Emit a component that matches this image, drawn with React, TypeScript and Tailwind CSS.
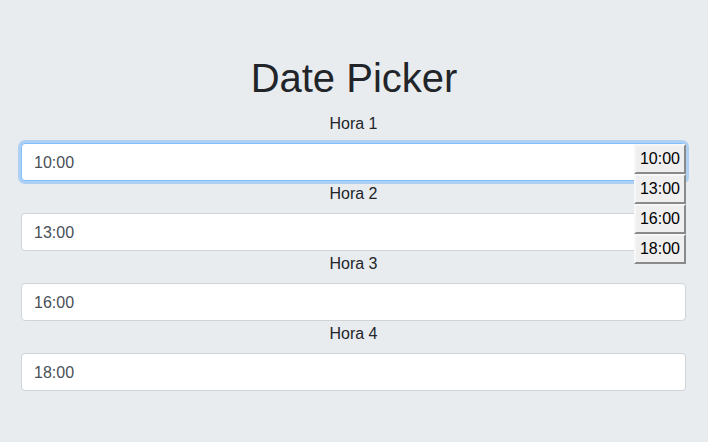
import React from "react";

const font = { fontFamily: '"Liberation Sans", Arial, sans-serif' };

export default function App() {
  const items = [
    { label: "Hora 1", value: "10:00", focus: true },
    { label: "Hora 2", value: "13:00" },
    { label: "Hora 3", value: "16:00" },
    { label: "Hora 4", value: "18:00" },
  ];
  return (
    <div className="min-h-[442px] w-[708px] bg-[#e9ecef] pt-[54px] text-[#212529]" style={font}>
      <h1 className="mb-[9px] text-center text-[40px] leading-[48px] font-normal text-[#212529]">Date Picker</h1>
      <div className="relative ml-[21px] mr-[22px]">
        {items.map((it) => (
          <div key={it.label} className="flex flex-col">
            <label className="mb-[7px] pt-[1px] text-center text-[16px] leading-[24px]">{it.label}</label>
            <div
              className={
                "h-[38px] rounded-[4px] border bg-white px-[12px] pt-[7px] text-[16px] leading-[24px] text-[#495057] " +
                (it.focus
                  ? "border-[#80bdff] shadow-[0_0_0_3px_rgba(0,123,255,0.25)]"
                  : "border-[#ced4da]")
              }
            >
              {it.value}
            </div>
          </div>
        ))}
        <div className="absolute right-0 top-[33px] flex w-[52px] flex-col">
          {["10:00", "13:00", "16:00", "18:00"].map((t) => (
            <button
              key={t}
              className="h-[30px] w-[52px] border-2 border-t-[#f7f7f7] border-l-[#f7f7f7] border-r-[#8a8a8a] border-b-[#8a8a8a] bg-[#efefef] text-[16px] leading-[26px] text-black"
              style={font}
            >
              {t}
            </button>
          ))}
        </div>
      </div>
    </div>
  );
}
